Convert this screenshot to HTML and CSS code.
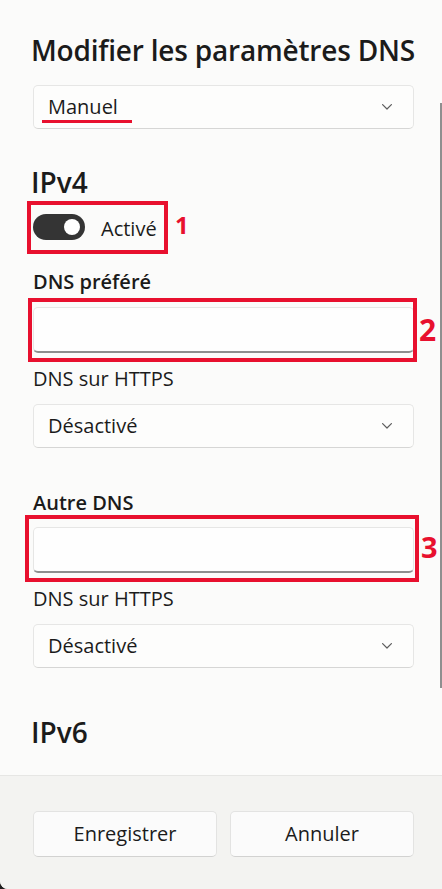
FILE: index.html
```html
<!DOCTYPE html>
<html lang="fr">
<head>
<meta charset="utf-8">
<title>Modifier les paramètres DNS</title>
<link rel="stylesheet" href="styles.css">
</head>
<body>
<div class="app">
  <div class="panel">
    <h1 class="title">Modifier les paramètres DNS</h1>

    <div class="select select-mode">
      <span class="select-text">Manuel</span>
      <svg class="chev" width="10" height="6" viewBox="0 0 10 6"><path d="M0.6 0.6 L5 5 L9.4 0.6" fill="none" stroke="#5e5e5e" stroke-width="1.2" stroke-linecap="round" stroke-linejoin="round"/></svg>
      <span class="underline-mark"></span>
    </div>

    <h2 class="section s-ipv4">IPv4</h2>

    <div class="toggle-row">
      <span class="toggle"><span class="knob"></span></span>
      <span class="toggle-label">Activé</span>
      <span class="mark mark-1"></span>
      <span class="num num-1">1</span>
    </div>

    <div class="label strong l-pref">DNS préféré</div>
    <div class="input-wrap w-pref">
      <div class="input"></div>
      <span class="mark mark-2"></span>
      <span class="num num-2">2</span>
    </div>

    <div class="label l-https">DNS sur HTTPS</div>
    <div class="select select-https">
      <span class="select-text">Désactivé</span>
      <svg class="chev" width="10" height="6" viewBox="0 0 10 6"><path d="M0.6 0.6 L5 5 L9.4 0.6" fill="none" stroke="#5e5e5e" stroke-width="1.2" stroke-linecap="round" stroke-linejoin="round"/></svg>
    </div>

    <div class="label strong l-alt">Autre DNS</div>
    <div class="input-wrap w-alt">
      <div class="input"></div>
      <span class="mark mark-3"></span>
      <span class="num num-3">3</span>
    </div>

    <div class="label l-https">DNS sur HTTPS</div>
    <div class="select select-https">
      <span class="select-text">Désactivé</span>
      <svg class="chev" width="10" height="6" viewBox="0 0 10 6"><path d="M0.6 0.6 L5 5 L9.4 0.6" fill="none" stroke="#5e5e5e" stroke-width="1.2" stroke-linecap="round" stroke-linejoin="round"/></svg>
    </div>

    <h2 class="section s-ipv6">IPv6</h2>
  </div>
  <div class="scrollbar"></div>
  <div class="footer">
    <button class="btn">Enregistrer</button>
    <button class="btn">Annuler</button>
  </div>
</div>
</body>
</html>
```
FILE: styles.css
```css
html, body {
  margin: 0;
  padding: 0;
  background: #1f1f1f;
}
.app {
  position: relative;
  width: 442px;
  height: 889px;
  overflow: hidden;
  background: #fbfbfa;
  border-bottom-left-radius: 8px;
  font-family: "Open Sans", "Noto Sans", sans-serif;
  color: #1b1b1b;
}
.panel {
  height: 775px;
  box-sizing: border-box;
  padding: 32px 28px 0 33px;
  overflow: hidden;
}
.title {
  margin: 0 -6px 0 -2px;
  font-size: 28px;
  line-height: 36px;
  font-weight: 600;
  letter-spacing: -0.2px;
  white-space: nowrap;
}
.select {
  position: relative;
  box-sizing: border-box;
  height: 44px;
  display: flex;
  align-items: center;
  justify-content: space-between;
  padding: 0 21px 0 14px;
  background: #fdfdfc;
  border: 1px solid #e6e6e5;
  border-bottom-color: #d6d6d5;
  border-radius: 5px;
}
.select-mode { margin-top: 17px; }
.select-https { margin-top: 11px; }
.select-text {
  font-size: 20px;
  line-height: 28px;
  color: #1b1b1b;
}
.chev { display: block; }
.underline-mark {
  position: absolute;
  left: 8px;
  top: 34px;
  width: 90px;
  height: 3px;
  background: #e8102e;
}
.section {
  margin: 0 0 0 -2px;
  font-size: 28px;
  line-height: 36px;
  font-weight: 600;
}
.s-ipv4 { margin-top: 35px; }
.s-ipv6 { margin-top: 46px; }
.toggle-row {
  position: relative;
  display: flex;
  align-items: center;
  margin-top: 13px;
  height: 27px;
}
.toggle {
  box-sizing: border-box;
  width: 52px;
  height: 26px;
  border-radius: 13px;
  background: #343434;
  display: flex;
  align-items: center;
  justify-content: flex-end;
  padding-right: 5px;
}
.knob {
  width: 16px;
  height: 16px;
  border-radius: 50%;
  background: #ffffff;
}
.toggle-label {
  margin-left: 16px;
  padding-top: 5px;
  font-size: 20px;
  line-height: 28px;
  color: #1b1b1b;
}
.mark {
  position: absolute;
  box-sizing: border-box;
  border: 4px solid #e8102e;
}
.mark-1 { left: -6px; top: -12px; width: 141px; height: 53px; }
.mark-2 { left: -5px; top: -9px; width: 389px; height: 64px; }
.mark-3 { left: -8px; top: -12px; width: 394px; height: 67px; }
.num {
  position: absolute;
  font-weight: 700;
  color: #e8102e;
}
.num-1 { left: 142px; top: 0; font-size: 24px; line-height: 24px; }
.num-2 { left: 386px; top: 8px; font-size: 30px; line-height: 30px; }
.num-3 { left: 388px; top: 5px; font-size: 29px; line-height: 30px; }
.label {
  font-size: 20px;
  line-height: 28px;
  color: #1b1b1b;
}
.strong { font-weight: 600; }
.l-pref { margin-top: 28px; }
.l-alt { margin-top: 41px; }
.l-https { margin-top: 12px; }
.input-wrap {
  position: relative;
}
.w-pref { margin-top: 11px; }
.w-alt { margin-top: 10px; }
.input {
  box-sizing: border-box;
  height: 46px;
  background: #fefefe;
  border: 1px solid #e6e6e5;
  border-bottom: 2px solid #8e8e8e;
  border-radius: 5px;
}
.scrollbar {
  position: absolute;
  right: 0;
  top: 103px;
  width: 2px;
  height: 585px;
  background: #8f8f8f;
}
.footer {
  box-sizing: border-box;
  height: 114px;
  border-top: 1px solid #e6e6e4;
  background: #f3f3f1;
  padding: 35px 28px 0 33px;
  display: flex;
  gap: 13px;
}
.btn {
  flex: 1;
  height: 46px;
  box-sizing: border-box;
  background: #fbfbfb;
  border: 1px solid #e3e3e2;
  border-bottom-color: #d2d2d1;
  border-radius: 5px;
  font-family: "Open Sans", "Noto Sans", sans-serif;
  font-size: 20px;
  line-height: 28px;
  color: #1b1b1b;
  padding: 0;
}
```
